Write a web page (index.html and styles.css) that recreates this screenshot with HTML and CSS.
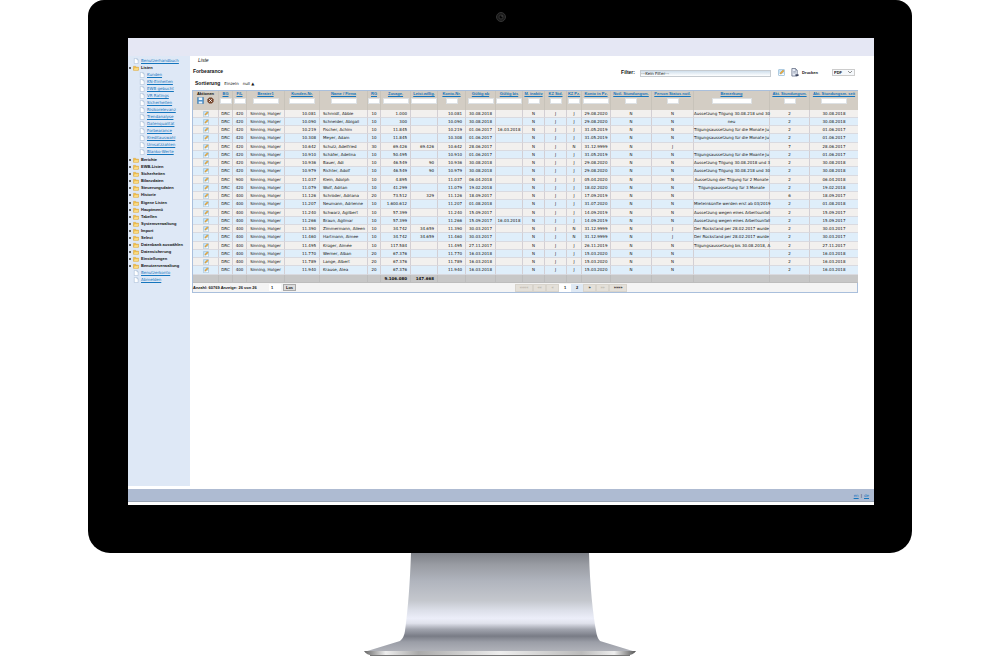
FILE: index.html
```html
<!DOCTYPE html>
<html lang="de">
<head>
<meta charset="utf-8">
<title>Forbearance</title>
<link rel="stylesheet" href="styles.css">
</head>
<body>
<svg class="sprite" aria-hidden="true">
  <symbol id="page" viewBox="0 0 12 14"><path d="M2 1h6l3 3v9H2z" fill="#fff" stroke="#8fa9ca"/><path d="M8 1v3h3" fill="none" stroke="#8fa9ca"/></symbol>
  <symbol id="folder" viewBox="0 0 14 12"><path d="M1 2h5l1 2h6v7H1z" fill="#f5c24a" stroke="#d39a36"/><path d="M3 6h11l-2 5H1z" fill="#ffe594" stroke="#dfa940"/></symbol>
  <symbol id="edit" viewBox="0 0 14 14"><rect x="1" y="1" width="12" height="12" rx="1" fill="#c5e2f7" stroke="#7fa9c6"/><path d="M2 9l4 2 6-2v3H2z" fill="#fff"/><path d="M4 10l1-3 5-5 2 2-5 5z" fill="#f0ad35" stroke="#b77a26" stroke-width=".7"/></symbol>
  <symbol id="save" viewBox="0 0 16 16"><path d="M1 1h14v14H1z" fill="#4f93cc" stroke="#36719f"/><path d="M4 1h8v6H4zM4 10h8v5H4z" fill="#eaf5ff"/></symbol>
  <symbol id="reset" viewBox="0 0 16 16"><path d="M5 1h6l4 4v6l-4 4H5l-4-4V5z" fill="#76452c"/><path d="M5 5l6 6M11 5l-6 6" stroke="#fff" stroke-width="2"/></symbol>
  <symbol id="print" viewBox="0 0 18 20"><path d="M2 1h8l4 4v13H2z" fill="#e8edf6" stroke="#4d5873" stroke-width="1.5"/><path d="M10 1v4h4M5 8h6M5 11h6" fill="none" stroke="#4d5873"/><path d="M10 14h7v4h-7z" fill="#3c4560"/></symbol>
</svg>
<div class="monitor">
  <svg class="camera" viewBox="0 0 10 10" aria-hidden="true"><circle cx="5" cy="5" r="4.5" fill="#1c1c1c" stroke="#333"/><circle cx="5" cy="5" r="2" fill="#050505" stroke="#3c3c3c" stroke-width=".7"/><circle cx="6" cy="4" r=".6" fill="#777"/></svg>
  <div class="screen">
    <header class="topbar"></header>
    <div class="body">
      <nav class="sidebar"><ul class="tree" id="tree"></ul></nav>
      <main class="content">
        <div class="crumb">Liste</div>
        <div class="headline">
          <h1 class="title">Forbearance</h1>
          <label class="filter-label" for="filter">Filter:</label>
          <select class="filter" id="filter"><option>---Kein Filter---</option></select>
          <button class="icon-button" aria-label="Filter bearbeiten"><svg class="icon"><use href="#edit"/></svg></button>
          <button class="print"><svg class="print-icon"><use href="#print"/></svg>Drucken</button>
          <div class="format-box">
            <select class="format" aria-label="Format"><option>PDF</option></select>
            <svg class="chevron" viewBox="0 0 6 4" aria-hidden="true"><path d="M1 1l2 2 2-2" fill="none" stroke="#777" stroke-width=".8"/></svg>
          </div>
        </div>
        <div class="sorting"><b>Sortierung</b><span>Einzeln</span><span>null ▲</span></div>
        <div class="grid">
          <table class="table">
            <colgroup id="cols"></colgroup>
            <thead><tr id="head"></tr></thead>
            <tbody id="rows"></tbody>
            <tfoot><tr id="foot"></tr></tfoot>
          </table>
          <div class="pager">
            <label class="count" for="pageno">Anzahl: 60769 Anzeige: 26 von 26</label>
            <input class="pageno" id="pageno" value="1">
            <button class="go">Los</button>
            <div class="pages">
              <button class="step wide-step" disabled>««««</button><button class="step" disabled>««</button><button class="step" disabled>«</button>
              <button class="page current">1</button><button class="page">2</button>
              <button class="step">»</button><button class="step" disabled>»»</button><button class="step wide-step">»»»»</button>
            </div>
          </div>
        </div>
      </main>
    </div>
    <footer class="statusbar"><a class="link" href="#">en</a><span>|</span><a class="link" href="#">de</a></footer>
  </div>
</div>
<svg class="stand" viewBox="0 0 272 103" aria-hidden="true">
  <defs>
    <linearGradient id="metal" x1="0" y1="0" x2="0" y2="1">
      <stop offset="0" stop-color="#7d8087"/><stop offset=".12" stop-color="#999ca3"/><stop offset=".28" stop-color="#b0b4bd"/><stop offset=".48" stop-color="#c4c7cd"/><stop offset=".58" stop-color="#dcdfe9"/><stop offset=".66" stop-color="#eceef9"/><stop offset=".71" stop-color="#dfe1eb"/><stop offset=".77" stop-color="#a2a5af"/><stop offset=".84" stop-color="#797c86"/><stop offset=".9" stop-color="#9b9ea7"/><stop offset="1" stop-color="#b2b4bb"/>
    </linearGradient>
    <linearGradient id="edge"><stop offset="0" stop-color="#666"/><stop offset=".08" stop-color="#eee"/><stop offset=".2" stop-color="#aaa"/><stop offset=".5" stop-color="#eee"/><stop offset=".8" stop-color="#bbb"/><stop offset=".92" stop-color="#eee"/><stop offset="1" stop-color="#555"/></linearGradient>
  </defs>
  <path d="M47 0H225C226 35 229 60 232 78Q233 85 236 88L272 99H0L36 88Q40 85 41 78C44 55 46 30 47 0Z" fill="url(#metal)"/>
  <path d="M0 98H272Q270 102 261 103H10Q2 102 0 98Z" fill="url(#edge)"/><path d="M6 102.5H266" stroke="#777"/>
</svg>
<script src="app.js"></script>
</body>
</html>
```
FILE: styles.css
```css
* { box-sizing: border-box; }
body {
  margin: 0;
  background: #fff;
  color: #111;
  font: 4px/7px "DejaVu Sans", sans-serif;
}
button, input, select { margin: 0; padding: 0; border: 0; border-radius: 0; font: inherit; color: inherit; background: none; }
.sprite { display: none; }
.monitor {
  width: 82.4%;
  margin: 0 auto;
  padding: 12px 38px 48px 40px;
  background: #000;
  border-radius: 16px 16px 22px 22px;
}
.camera { display: block; width: 10px; height: 10px; margin: 0 auto 16px; }
.screen { background: #fff; padding-bottom: 3px; }
.topbar { height: 18px; background: #e5e7f4; }
.body { display: flex; min-height: 430px; margin-bottom: 3px; }
.sidebar { flex: none; width: 62px; background: #dee8f6; }
.tree, .subtree { margin: 0; padding: 0; list-style: none; }
.tree { padding-top: 1px; }
.tree > li:nth-child(3), .tree > li:nth-child(9) { padding-top: 1px; }
.node { display: flex; align-items: center; gap: 2px; height: 7px; padding-left: 1px; white-space: nowrap; }
.node b, .table th, .pager, .print, .format { font-family: "Liberation Sans", sans-serif; font-weight: 700; }
.node::before { content: ""; flex: none; width: 2px; height: 2px; }
.node.branch::before { background: #333; border-radius: 1px; }
.subtree .node { padding-left: 7px; }
.node .icon { width: 6px; height: 6px; }
.link { color: #1475bd; text-decoration: underline; text-decoration-thickness: 1px; }
.icon { display: block; flex: none; width: 7px; height: 7px; }

.content { flex: 1; min-width: 0; padding: 1px 16px 0 2px; }
.crumb { padding-left: 6px; font: italic 5px/7px "Liberation Sans", sans-serif; }
.headline { display: flex; align-items: center; height: 16px; }
.title { flex: 1; margin: 0; padding: 0 0 2px 1px; font: bold 5px/7px "Liberation Sans", sans-serif; }
.filter-label { margin-right: 5px; padding-top: 1px; font: bold 5px/7px "Liberation Sans", sans-serif; }
.filter { width: 131px; height: 7px; margin-top: 2px; appearance: none; background: linear-gradient(#cfdfec, #fff); border: 1px solid #c6cbd0; line-height: 5px; }
.icon-button { margin: 0 6px 0 7px; }
.print { display: flex; align-items: center; gap: 3px; margin-right: 14px; }
.print-icon { width: 8px; height: 9px; }
.format-box { display: grid; align-items: center; margin-right: 3px; }
.format { grid-area: 1 / 1; width: 23px; height: 7px; padding-left: 1px; appearance: none; border: 1px solid #ccc; line-height: 5px; background: #f5f8fb; }
.chevron { grid-area: 1 / 1; justify-self: end; width: 6px; height: 4px; margin-right: 2px; pointer-events: none; }
.sorting { display: flex; gap: 4px; height: 10px; padding: 0 0 2px 3px; }
.sorting b { font: bold 5px/7px "Liberation Sans", sans-serif; }

.grid { border: 1px solid #a9bfdc; background: #fff; }
.table { width: 100%; table-layout: fixed; border-collapse: separate; border-spacing: 0; line-height: 6px; }
.table th, .table td { padding: 0; white-space: nowrap; text-align: center; border-right: 1px solid #d3cfd4; }
.table th:last-child, .table td:last-child { border-right: 0; }
.table th { height: 19px; vertical-align: top; background: #d3cdc4; border-right-color: #c8c3ba; }
.table th .link { display: block; }
.table td { height: 8px; border-bottom: 1px solid #d9dae0; }
.table tr:nth-child(4n) td { height: 9px; }
.table tbody tr:nth-child(odd) td { background: #f2f0ee; }
.table tbody tr:nth-child(even) td { background: #dfeefa; }
.table tfoot td { background: #c7c7c7; border-color: #bdbdbd; font-weight: 700; }
.table td.num { text-align: right; padding-right: 3px; }
.table td.name { text-align: left; padding-left: 3px; }
.table td .icon { width: 6px; height: 6px; margin: 0 auto; }
.actions { display: flex; justify-content: center; gap: 3px; }
.actions .icon { width: 7px; height: 7px; }
.field { display: block; height: 6px; margin: 1px auto 0; padding: 0 1px; background: #fff; border: 1px solid #dde1e4; }
.narrow { width: 12px; }
.medium { width: 26px; }
.wide { width: 40px; }

.pager { display: flex; align-items: center; height: 9px; background: #f4f4f4; }
.count { flex: none; width: 76px; white-space: nowrap; }
.pageno { width: 12px; height: 7px; padding-left: 2px; background: #fff; }
.go { width: 13px; height: 7px; margin-left: 2px; background: #ddd; border: 1px solid #aaa; line-height: 5px; }
.pages { display: flex; margin: 0 auto 0 33%; }
.step { width: 13px; height: 8px; background: #e4e0d9; border: 1px solid #d8d4cc; line-height: 6px; }
.wide-step { width: 18px; }
.step:disabled { color: #b9b4aa; }
.page { width: 12px; height: 8px; line-height: 8px; background: #dfe9f4; }
.page.current { background: #fff; }

.statusbar { display: flex; justify-content: flex-end; align-items: center; gap: 2px; height: 13px; padding-right: 5px; background: #aebbd2; border-bottom: 1px solid #98a3b3; }
.stand { display: block; width: 272px; height: 103px; margin: 0 auto; }
```
FILE: app.js
```js
const icon = (name) => `<svg class="icon" aria-hidden="true"><use href="#${name}"/></svg>`;
const leaf = (t) => `<li><div class="node">${icon("page")}<a class="link" href="#">${t}</a></div></li>`;
const branch = (t, sub = "") => `<li><div class="node branch">${icon("folder")}<b>${t}</b></div>${sub}</li>`;

const lists = ["Kunden", "KN-Einheiten", "EWB gebucht", "VR Ratings", "Sicherheiten", "Risikorelevanz", "Trendanalyse", "Datenqualität", "Forbearance", "Kreditauswahl", "Umsatzzahlen", "Blanko-Werte"];
const folders = ["Berichte", "EWB-Listen", "Sicherheiten", "Bilanzdaten", "Steuerungsdaten", "Historie", "Eigene Listen", "Hauptmenü", "Tabellen", "Systemverwaltung", "Import", "Select", "Datenbank auswählen", "Datensicherung", "Einstellungen", "Benutzerverwaltung"];
document.getElementById("tree").innerHTML =
  leaf("Benutzerhandbuch") +
  branch("Listen", `<ul class="subtree">${lists.map(leaf).join("")}</ul>`) +
  folders.map((f) => branch(f)).join("") +
  leaf("Benutzerkonto") + leaf("Abmelden");

// label, column width, filter field size, cell class
const columns = [
  ["Aktionen", 26, "", ""], ["BG", 14, "narrow", ""], ["F/L", 14, "narrow", ""],
  ["Berater1", 38, "medium", ""], ["Kunden-Nr.", 35, "medium", "num"], ["Name / Firma", 48, "medium", "name"],
  ["RG", 13, "narrow", ""], ["Zusage.", 30, "medium", "num"], ["Leist.willig.", 27, "medium", "num"],
  ["Konto-Nr.", 28, "narrow", "num"], ["Gültig ab", 30, "medium", ""], ["Gültig bis", 27, "medium", ""],
  ["M. inaktiv", 22, "narrow", ""], ["KZ Std.", 22, "narrow", ""], ["KZ Pz.", 15, "narrow", ""],
  ["Konto in Pz.", 29, "medium", ""], ["Notl. Stundungsm.", 41, "narrow", ""], ["Person Status notl.", 42, "narrow", ""],
  ["Bemerkung", 76, "wide", ""], ["Akt. Stundungsm.", 40, "narrow", ""], ["Akt. Stundungsm. seit", 48, "medium", ""]
];
document.getElementById("cols").innerHTML = columns.map((c) => `<col style="width:${c[1]}px">`).join("");
document.getElementById("head").innerHTML = columns.map(([label, , size], i) =>
  i === 0
    ? `<th>${label}<div class="actions">${icon("save")}${icon("reset")}</div></th>`
    : `<th><a class="link" href="#">${label}</a><input class="field ${size}" aria-label="${label}"></th>`
).join("");

// F/L; number; name; RG; commitment; drawn; from; until; in Pz.; account since; person status; note; measures; since
const data = `420;10.081;Schmidt, Abbie;10;1.000;;30.08.2018;;J;29.08.2020;N;Aussetzung Tilgung 30.08.218 und 30;2;30.08.2018
420;10.090;Schneider, Abigail;10;300;;30.08.2018;;J;29.08.2020;N;neu;2;30.08.2018
420;10.219;Fischer, Achim;10;11.845;;01.06.2017;16.03.2018;J;31.05.2019;N;Tilgungsaussetzung für die Monate Ju;2;01.06.2017
420;10.308;Meyer, Adam;10;11.845;;01.06.2017;;J;31.05.2019;N;Tilgungsaussetzung für die Monate Ju;2;01.06.2017
420;10.642;Schulz, Adelfried;30;69.426;69.426;28.06.2017;;N;31.12.9999;J;;7;28.06.2017
420;10.910;Schäfer, Adelina;10;50.495;;01.06.2017;;J;31.05.2019;N;Tilgungsaussetzung für die Moante Ju;2;01.06.2017
420;10.936;Bauer, Adi;10;46.549;90;30.08.2018;;J;29.08.2020;N;Aussetzung Tilgung 30.08.2018 und 3;2;30.08.2018
420;10.979;Richter, Adolf;10;46.549;90;30.08.2018;;J;29.08.2020;N;Aussetzung Tilgung 30.08.218 und 30;2;30.08.2018
900;11.037;Klein, Adolph;10;4.895;;06.04.2018;;J;05.04.2020;N;Aussetzung der Tilgung für 2 Monate;2;06.04.2018
420;11.079;Wolf, Adrian;10;41.299;;19.02.2018;;J;18.02.2020;N;Tilgungsaussetzung für 3 Monate;2;19.02.2018
400;11.126;Schröder, Adriana;20;73.512;329;18.09.2017;;J;17.09.2019;N;;6;18.09.2017
400;11.207;Neumann, Adrienne;10;1.600.612;;01.08.2018;;J;31.07.2020;N;Mieteinkünfte werden erst ab 03/2019;2;01.08.2018
400;11.240;Schwarz, Agilbert;10;57.399;;15.09.2017;;J;14.09.2019;N;Aussetzung wegen eines Arbeitsunfall;2;15.09.2017
400;11.266;Braun, Agilmar;10;57.399;;15.09.2017;16.03.2018;J;14.09.2019;N;Aussetzung wegen eines Arbeitsunfall;2;15.09.2017
400;11.390;Zimmermann, Aileen;10;34.742;34.659;30.03.2017;;N;31.12.9999;J;Der Rückstand per 28.02.2017 wurde;2;30.03.2017
400;11.460;Hartmann, Aimee;10;34.742;34.659;30.03.2017;;N;31.12.9999;J;Der Rückstand per 28.02.2017 wurde;2;30.03.2017
400;11.495;Krüger, Aimée;10;117.584;;27.11.2017;;J;26.11.2019;N;Tilgungsaussetzung bis 30.08.2018, A;2;27.11.2017
400;11.770;Werner, Alban;20;67.376;;16.03.2018;;J;15.03.2020;N;;2;16.03.2018
400;11.789;Lange, Albert;20;67.376;;16.03.2018;;J;15.03.2020;N;;2;16.03.2018
400;11.940;Krause, Alea;20;67.376;;16.03.2018;;J;15.03.2020;N;;2;16.03.2018`;
const cells = (values) => values.map((v, i) => `<td class="${columns[i][3]}">${v}</td>`).join("");
document.getElementById("rows").innerHTML = data.split("\n").map((line) => {
  const [fl, nr, name, rg, sum, drawn, from, until, pz, since, person, note, n, last] = line.split(";");
  return `<tr>${cells([icon("edit"), "DRC", fl, "Sinning, Holger", nr, name, rg, sum, drawn, nr, from, until, "N", "J", pz, since, "N", person, note, n, last])}</tr>`;
}).join("");
document.getElementById("foot").innerHTML = cells(columns.map((c, i) => ({ 7: "9.106.080", 8: "147.668" })[i] || ""));
```
